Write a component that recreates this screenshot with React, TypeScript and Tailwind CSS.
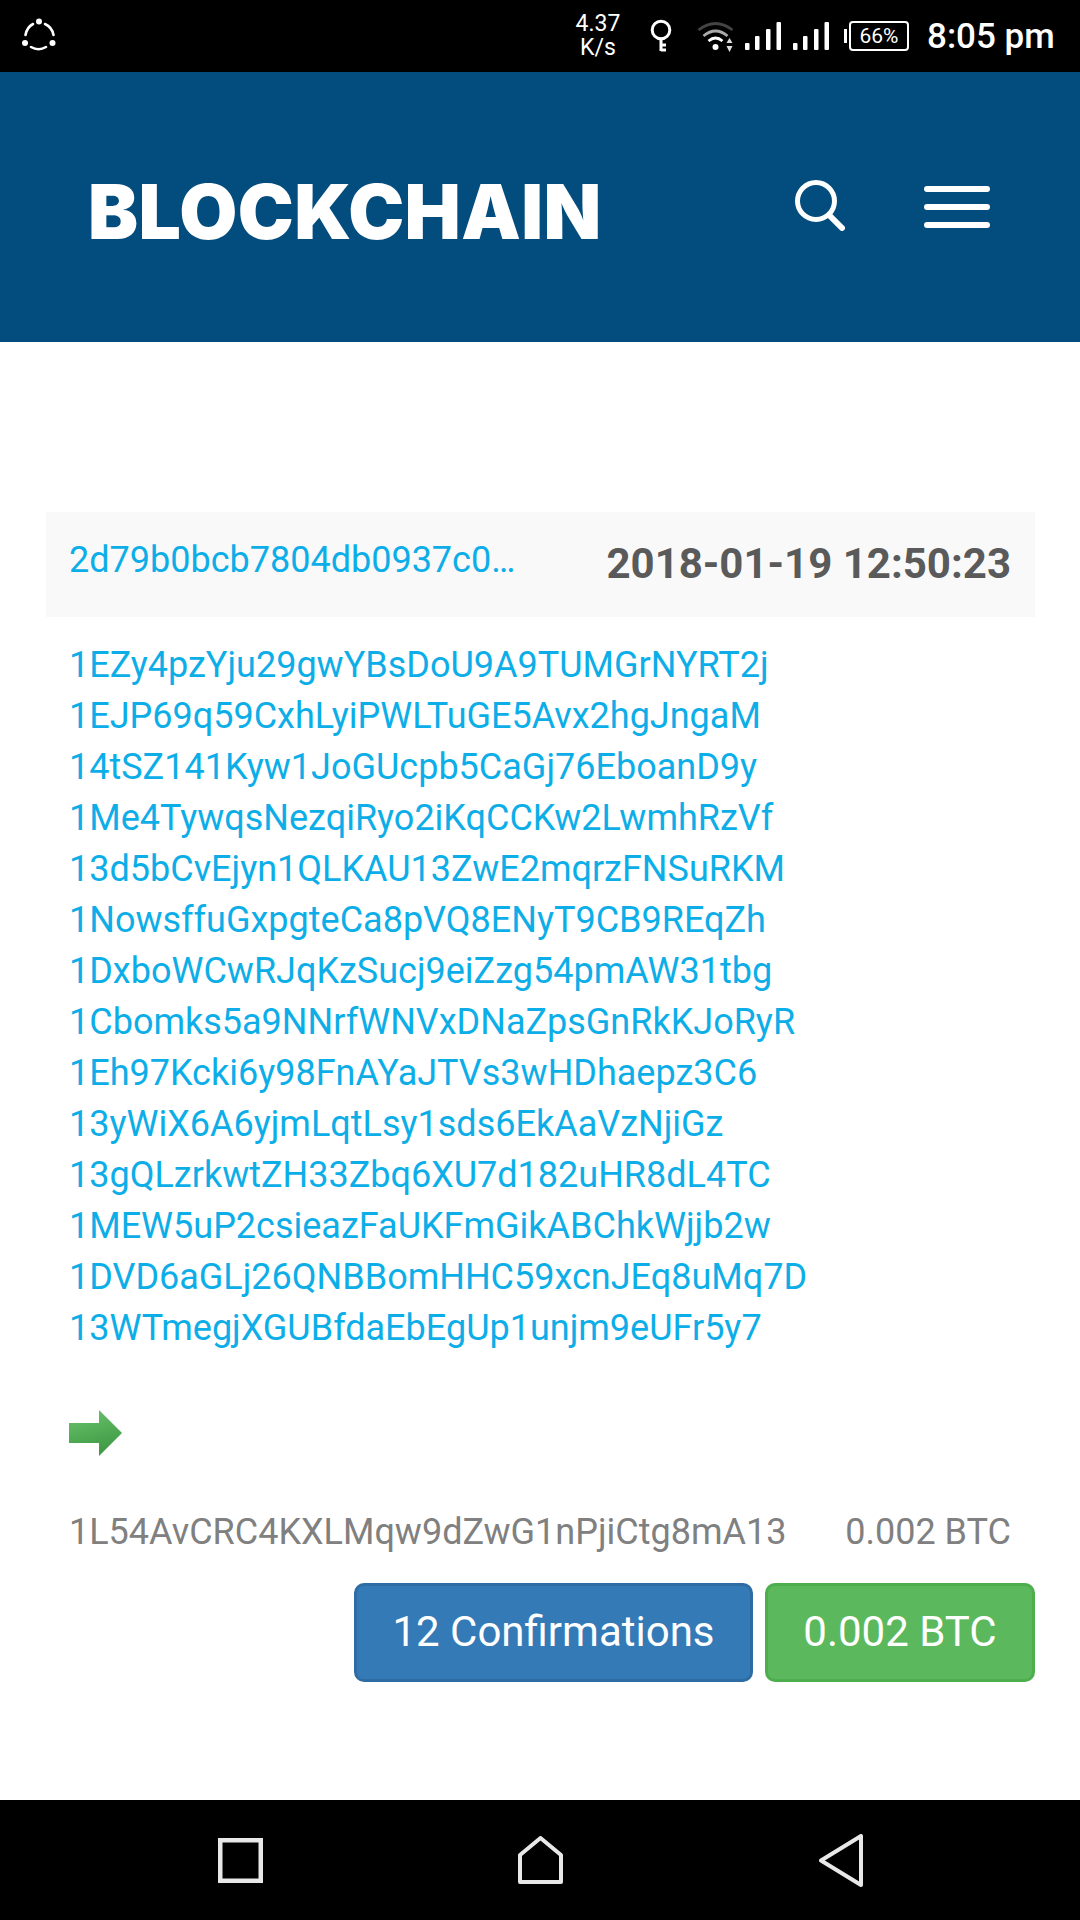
const addresses = [
  "1EZy4pzYju29gwYBsDoU9A9TUMGrNYRT2j",
  "1EJP69q59CxhLyiPWLTuGE5Avx2hgJngaM",
  "14tSZ141Kyw1JoGUcpb5CaGj76EboanD9y",
  "1Me4TywqsNezqiRyo2iKqCCKw2LwmhRzVf",
  "13d5bCvEjyn1QLKAU13ZwE2mqrzFNSuRKM",
  "1NowsffuGxpgteCa8pVQ8ENyT9CB9REqZh",
  "1DxboWCwRJqKzSucj9eiZzg54pmAW31tbg",
  "1Cbomks5a9NNrfWNVxDNaZpsGnRkKJoRyR",
  "1Eh97Kcki6y98FnAYaJTVs3wHDhaepz3C6",
  "13yWiX6A6yjmLqtLsy1sds6EkAaVzNjiGz",
  "13gQLzrkwtZH33Zbq6XU7d182uHR8dL4TC",
  "1MEW5uP2csieazFaUKFmGikABChkWjjb2w",
  "1DVD6aGLj26QNBBomHHC59xcnJEq8uMq7D",
  "13WTmegjXGUBfdaEbEgUp1unjm9eUFr5y7",
];

function Bars() {
  return (
    <svg width="36" height="30" viewBox="0 0 36 30" fill="#fff">
      <rect x="0" y="22" width="4.500" height="7" rx="1" />
      <rect x="10" y="15" width="4.500" height="14" rx="1" />
      <rect x="21" y="8" width="4.500" height="21" rx="1" />
      <rect x="31.500" y="1" width="4.500" height="28" rx="1" />
    </svg>
  );
}

export default function App() {
  return (
    <div className="w-[1080px] h-[1920px] bg-white flex flex-col font-['Roboto',sans-serif]">
      {/* Status bar */}
      <div className="h-[72px] bg-black flex items-center text-white shrink-0">
        <svg className="ml-[21px]" width="36" height="36" viewBox="0 0 36 36" fill="none" stroke="#fff" strokeWidth="2.600" strokeLinecap="round">
          <path d="M12 6 Q6 9 4.500 17" />
          <path d="M24 6 Q31 9 32.500 17" />
          <path d="M10 29 Q17.500 33.500 25 29" />
          <circle cx="18" cy="3.500" r="3" fill="#fff" stroke="none" />
          <circle cx="4" cy="25" r="3" fill="#fff" stroke="none" />
          <circle cx="31.500" cy="25" r="3" fill="#fff" stroke="none" />
        </svg>
        <div className="ml-[518px] w-[46px] flex flex-col items-center text-[23px] leading-[24px]">
          <span>4.37</span>
          <span>K/s</span>
        </div>
        <svg className="ml-[29px]" width="22" height="34" viewBox="0 0 22 34" fill="none" stroke="#fff" strokeWidth="3">
          <circle cx="11" cy="11" r="8.800" />
          <path d="M11 20 V32 M11 26 H16 M11 31 H16" />
        </svg>
        <svg className="ml-[25px]" width="37" height="32" viewBox="0 0 36 32" fill="none">
          <path d="M1 10 Q18 -3 35 10" stroke="#444" strokeWidth="2.800" />
          <path d="M6 16 Q18 6 30 16" stroke="#aaa" strokeWidth="2.800" />
          <path d="M11 21 Q18 15 25 21" stroke="#fff" strokeWidth="2.800" />
          <circle cx="18" cy="27" r="3" fill="#fff" />
          <path d="M32 18 L35 23 H29 Z M32 32 L35 26 H29 Z" fill="#ddd" />
        </svg>
        <div className="ml-[11px] flex gap-[12px]">
          <Bars />
          <Bars />
        </div>
        <div className="ml-[15px] flex items-center">
          <div className="w-[3px] h-[14px] bg-white mr-[2px]" />
          <div className="w-[60px] h-[30px] border-[2.5px] border-white rounded-[4px] flex items-center justify-center text-[21px] leading-none">
            66%
          </div>
        </div>
        <span className="ml-[18px] text-[35px] leading-none font-medium whitespace-nowrap">8:05 pm</span>
      </div>

      {/* Header */}
      <div className="h-[270px] bg-[#034c7e] flex items-center shrink-0 text-white">
        <span className="ml-[88px] w-[619px] text-[75px] leading-none font-black tracking-[0.4px] font-['Inter',sans-serif] mt-[8px]">
          BLOCKCHAIN
        </span>
        <svg className="ml-[88px] mb-[3px]" width="50" height="51" viewBox="0 0 50 51" fill="none" stroke="#fff" strokeLinecap="round">
          <circle cx="21" cy="21" r="18.500" strokeWidth="5" />
          <path d="M34 35 L47 48" strokeWidth="6" />
        </svg>
        <div className="ml-[79px] w-[66px] flex flex-col gap-[12px]">
          <div className="h-[6px] rounded-full bg-white" />
          <div className="h-[6px] rounded-full bg-white" />
          <div className="h-[6px] rounded-full bg-white" />
        </div>
      </div>

      {/* Transaction */}
      <div className="flex-1 pl-[46px] pr-[45px] pt-[170px]">
        <div className="h-[105px] bg-[#f9f9f9] px-[24px] flex items-center justify-between">
          <a className="text-[#0daee8] text-[36px] -mt-[10px] -ml-[1px]">2d79b0bcb7804db0937c0…</a>
          <span className="text-[#5a5a5a] text-[42px] font-bold -mt-[2px]">2018-01-19 12:50:23</span>
        </div>
        <div className="px-[23px] pt-[23px] flex flex-col">
          {addresses.map((a) => (
            <a key={a} className="text-[#0daee8] text-[36px] leading-[51px]">{a}</a>
          ))}
        </div>
        <div className="px-[23px] mt-[55px]">
          <svg width="54" height="48" viewBox="0 0 54 48">
            <defs>
              <linearGradient id="g" x1="0" y1="0" x2="0.300" y2="1">
                <stop offset="0" stopColor="#6cc46c" />
                <stop offset="1" stopColor="#3f9a46" />
              </linearGradient>
            </defs>
            <path d="M0 14 H30 V1 L53 24 L30 47 V34 H0 Z" fill="url(#g)" />
          </svg>
        </div>
        <div className="pl-[23px] pr-[24px] mt-[50px] flex justify-between text-[36px] leading-[51px] text-[#808080]">
          <span>1L54AvCRC4KXLMqw9dZwG1nPjiCtg8mA13</span>
          <span>0.002 BTC</span>
        </div>
        <div className="mt-[25px] flex justify-end gap-[12px] text-white text-[42px]">
          <div className="w-[399px] h-[99px] pb-[2px] bg-[#337ab7] border-[3px] border-[#2e6da4] rounded-[10px] flex items-center justify-center">
            12 Confirmations
          </div>
          <div className="w-[270px] h-[99px] pb-[2px] bg-[#5cb85c] border-[3px] border-[#4cae4c] rounded-[10px] flex items-center justify-center">
            0.002 BTC
          </div>
        </div>
      </div>

      {/* Nav bar */}
      <div className="h-[120px] bg-black flex items-center shrink-0">
        <svg className="ml-[218px]" width="45" height="45" viewBox="0 0 45 45" fill="none" stroke="#e8e8e8" strokeWidth="4.500">
          <rect x="2.250" y="2.250" width="40.500" height="40.500" />
        </svg>
        <svg className="ml-[255px]" width="45" height="48" viewBox="0 0 45 48" fill="none" stroke="#e8e8e8" strokeWidth="4" strokeLinejoin="round">
          <path d="M22.500 2 L43 19 V46 H2 V19 Z" />
        </svg>
        <svg className="ml-[256px]" width="44" height="53" viewBox="0 0 44 53" fill="none" stroke="#e8e8e8" strokeWidth="4" strokeLinejoin="round">
          <path d="M42 2 V51 L2 26.500 Z" />
        </svg>
      </div>
    </div>
  );
}
